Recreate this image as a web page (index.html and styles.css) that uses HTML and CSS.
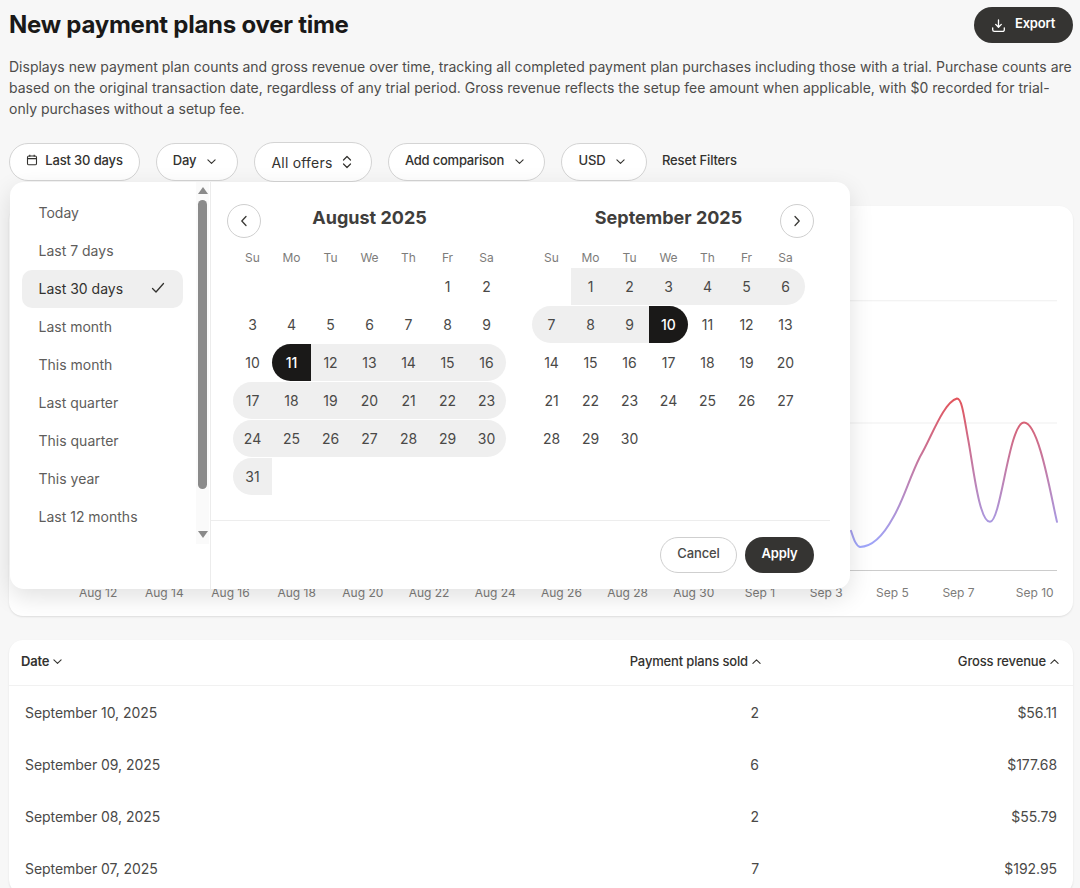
FILE: index.html
```html
<!DOCTYPE html>
<html lang="en">
<head>
<meta charset="utf-8">
<title>New payment plans over time</title>
<link rel="stylesheet" href="styles.css">
</head>
<body>
<main class="page">
  <header class="head">
    <h1 class="title">New payment plans over time</h1>
    <button class="export"><svg class="export-icon" viewBox="0 0 16 16" fill="none" stroke="currentColor" stroke-width="1.4" stroke-linecap="round" stroke-linejoin="round"><path d="M8 2v7.500M5 6.800 8 9.800l3-3M1.800 10.500v2a1.800 1.800 0 0 0 1.800 1.800h8.800a1.800 1.800 0 0 0 1.800-1.800v-2"/></svg>Export</button>
  </header>
  <p class="desc">Displays new payment plan counts and gross revenue over time, tracking all completed payment plan purchases including those with a trial. Purchase counts are based on the original transaction date, regardless of any trial period. Gross revenue reflects the setup fee amount when applicable, with $0 recorded for trial-only purchases without a setup fee.</p>

  <div class="filters">
    <button class="pill pill-date"><svg class="cal-icon" viewBox="0 0 12 12" fill="none" stroke="currentColor" stroke-width="1.1"><rect x="1.500" y="2" width="9" height="8.800" rx="1.400"/><path d="M1.500 4.600h9M3.800 .8v2M8.200 .8v2"/></svg>Last 30 days</button>
    <button class="pill pill-day">Day<svg class="chev" viewBox="0 0 10 6" fill="none" stroke="currentColor" stroke-width="1.200" stroke-linecap="round" stroke-linejoin="round"><path d="M1 1l4 4 4-4"/></svg></button>
    <button class="pill pill-offers">All offers<svg class="updown" viewBox="0 0 10 14" fill="none" stroke="currentColor" stroke-width="1.200" stroke-linecap="round" stroke-linejoin="round"><path d="M1.500 5 5 1.500 8.500 5M1.500 9 5 12.500 8.500 9"/></svg></button>
    <button class="pill pill-compare">Add comparison<svg class="chev" viewBox="0 0 10 6" fill="none" stroke="currentColor" stroke-width="1.200" stroke-linecap="round" stroke-linejoin="round"><path d="M1 1l4 4 4-4"/></svg></button>
    <button class="pill pill-usd">USD<svg class="chev" viewBox="0 0 10 6" fill="none" stroke="currentColor" stroke-width="1.200" stroke-linecap="round" stroke-linejoin="round"><path d="M1 1l4 4 4-4"/></svg></button>
    <button class="reset">Reset Filters</button>

    <div class="popup">
      <aside class="presets">
        <ul class="preset-list">
          <li class="preset">Today</li>
          <li class="preset">Last 7 days</li>
          <li class="preset preset-on">Last 30 days<svg class="check" viewBox="0 0 14 12" fill="none" stroke="currentColor" stroke-width="1.300" stroke-linecap="round" stroke-linejoin="round"><path d="M1.500 6.500 5 10l7.500-8.500"/></svg></li>
          <li class="preset">Last month</li>
          <li class="preset">This month</li>
          <li class="preset">Last quarter</li>
          <li class="preset">This quarter</li>
          <li class="preset">This year</li>
          <li class="preset">Last 12 months</li>
        </ul>
        <div class="scrollbar">
          <span class="arrow-up"></span>
          <span class="thumb"></span>
          <span class="arrow-down"></span>
        </div>
      </aside>
      <section class="cal">
        <div class="months">
          <div class="month month-a">
            <div class="month-head">
              <button class="nav"><svg viewBox="0 0 8 12" fill="none" stroke="currentColor" stroke-width="1.300" stroke-linecap="round" stroke-linejoin="round"><path d="M6 1.500 1.800 6 6 10.500"/></svg></button>
              <h2 class="month-title">August 2025</h2>
              <span class="nav-space"></span>
            </div>
            <div class="grid">
              <span class="wd">Su</span><span class="wd">Mo</span><span class="wd">Tu</span><span class="wd">We</span><span class="wd">Th</span><span class="wd">Fr</span><span class="wd">Sa</span>
              <span class="d"></span><span class="d"></span><span class="d"></span><span class="d"></span><span class="d"></span><span class="d">1</span><span class="d">2</span>
              <span class="d">3</span><span class="d">4</span><span class="d">5</span><span class="d">6</span><span class="d">7</span><span class="d">8</span><span class="d">9</span>
              <span class="d">10</span><span class="d sel sel-l">11</span><span class="d r">12</span><span class="d r">13</span><span class="d r">14</span><span class="d r">15</span><span class="d r rr">16</span>
              <span class="d r rl">17</span><span class="d r">18</span><span class="d r">19</span><span class="d r">20</span><span class="d r">21</span><span class="d r">22</span><span class="d r rr">23</span>
              <span class="d r rl">24</span><span class="d r">25</span><span class="d r">26</span><span class="d r">27</span><span class="d r">28</span><span class="d r">29</span><span class="d r rr">30</span>
              <span class="d r rl">31</span>
            </div>
          </div>
          <div class="month month-b">
            <div class="month-head">
              <span class="nav-space"></span>
              <h2 class="month-title">September 2025</h2>
              <button class="nav"><svg viewBox="0 0 8 12" fill="none" stroke="currentColor" stroke-width="1.300" stroke-linecap="round" stroke-linejoin="round"><path d="M2 1.500 6.200 6 2 10.500"/></svg></button>
            </div>
            <div class="grid">
              <span class="wd">Su</span><span class="wd">Mo</span><span class="wd">Tu</span><span class="wd">We</span><span class="wd">Th</span><span class="wd">Fr</span><span class="wd">Sa</span>
              <span class="d"></span><span class="d r">1</span><span class="d r">2</span><span class="d r">3</span><span class="d r">4</span><span class="d r">5</span><span class="d r rr">6</span>
              <span class="d r rl">7</span><span class="d r">8</span><span class="d r">9</span><span class="d sel sel-r">10</span><span class="d">11</span><span class="d">12</span><span class="d">13</span>
              <span class="d">14</span><span class="d">15</span><span class="d">16</span><span class="d">17</span><span class="d">18</span><span class="d">19</span><span class="d">20</span>
              <span class="d">21</span><span class="d">22</span><span class="d">23</span><span class="d">24</span><span class="d">25</span><span class="d">26</span><span class="d">27</span>
              <span class="d">28</span><span class="d">29</span><span class="d">30</span>
            </div>
          </div>
        </div>
        <footer class="cal-foot">
          <button class="cancel">Cancel</button>
          <button class="apply">Apply</button>
        </footer>
      </section>
    </div>
  </div>

  <section class="card chart">
    <svg class="plot" viewBox="0 0 1064 364" preserveAspectRatio="none" fill="none">
      <defs>
        <linearGradient id="lineGrad" gradientUnits="userSpaceOnUse" x1="0" y1="192" x2="0" y2="340">
          <stop offset="0" stop-color="#e2555c"/>
          <stop offset="1" stop-color="#9ea6fb"/>
        </linearGradient>
      </defs>
      <path class="gridline" d="M70 94.500H1048M70 216.500H1048"/>
      <path class="axis" d="M70 364H1048"/>
      <path class="curve" stroke="url(#lineGrad)" d="M842 324C845 333 847 339 851 340C862 340 873 331 884 311C895 292 900 272 911 250C922 232 934 196 948 192C953 192 955 210 959 232C964 258 970 315 981 315C992 315 1000 216 1015 216C1030 216 1042 290 1048 315"/>
    </svg>
    <div class="xlabels">
      <span>Aug 12</span><span>Aug 14</span><span>Aug 16</span><span>Aug 18</span><span>Aug 20</span><span>Aug 22</span><span>Aug 24</span><span>Aug 26</span><span>Aug 28</span><span>Aug 30</span><span>Sep 1</span><span>Sep 3</span><span>Sep 5</span><span>Sep 7</span><span class="last">Sep 10</span>
    </div>
  </section>

  <section class="card table">
    <div class="row row-head">
      <span class="th">Date<svg class="sort" viewBox="0 0 10 6" fill="none" stroke="currentColor" stroke-width="1.200" stroke-linecap="round" stroke-linejoin="round"><path d="M1 1l4 4 4-4"/></svg></span>
      <span class="th th-r">Payment plans sold<svg class="sort" viewBox="0 0 10 6" fill="none" stroke="currentColor" stroke-width="1.200" stroke-linecap="round" stroke-linejoin="round"><path d="M1 5l4-4 4 4"/></svg></span>
      <span class="th th-r">Gross revenue<svg class="sort" viewBox="0 0 10 6" fill="none" stroke="currentColor" stroke-width="1.200" stroke-linecap="round" stroke-linejoin="round"><path d="M1 5l4-4 4 4"/></svg></span>
    </div>
    <div class="row"><span class="td">September 10, 2025</span><span class="td td-r">2</span><span class="td td-r">$56.11</span></div>
    <div class="row"><span class="td">September 09, 2025</span><span class="td td-r">6</span><span class="td td-r">$177.68</span></div>
    <div class="row"><span class="td">September 08, 2025</span><span class="td td-r">2</span><span class="td td-r">$55.79</span></div>
    <div class="row"><span class="td">September 07, 2025</span><span class="td td-r">7</span><span class="td td-r">$192.95</span></div>
  </section>
</main>
</body>
</html>
```
FILE: styles.css
```css
* { box-sizing: border-box; }
html, body { margin: 0; height: 888px; overflow: hidden; }
body { background: #f7f7f7; font-family: Inter, "Liberation Sans", sans-serif; color: #1a1918; }
button { font: inherit; cursor: pointer; background: none; border: 0; padding: 0; color: inherit; }

.page { padding: 7px 7px 0 9px; }

.head { display: flex; justify-content: space-between; align-items: center; height: 36px; }
.title { margin: 0; font-size: 24px; font-weight: 700; letter-spacing: -0.25px; line-height: 36px; color: #1a1918; }
.export { display: flex; align-items: center; gap: 9px; width: 99px; height: 36px; padding: 0 0 4px 17px; border-radius: 18px; background: #353432; color: #fff; font-size: 13px; font-weight: 600; letter-spacing: -0.2px; }
.export-icon { width: 15px; height: 15px; margin-top: 4px; }

.desc { margin: 13px 0 0; font-size: 14px; line-height: 21px; color: #4d4c4a; letter-spacing: 0; }

.filters { position: relative; display: flex; align-items: center; gap: 16px; margin-top: 23px; height: 40px; }
.pill { display: flex; align-items: center; justify-content: center; height: 38px; padding-bottom: 4px; background: #fff; border: 1px solid #d4d4d4; border-radius: 19px; font-size: 13px; font-weight: 500; letter-spacing: -0.15px; color: #33322f; }
.pill-date { width: 131px; gap: 7px; }
.pill-day { width: 82px; gap: 11px; padding-right: 5px; }
.pill-offers { width: 118px; height: 40px; border-radius: 20px; gap: 9px; font-size: 14px; font-weight: 400; letter-spacing: 0.2px; padding: 0 3px 0 0; }
.pill-compare { width: 157px; gap: 11px; padding-right: 4px; letter-spacing: -0.22px; }
.pill-usd { width: 86px; gap: 11px; padding-right: 4px; }
.cal-icon { width: 12px; height: 12px; }
.chev { width: 9px; height: 5.400px; margin-top: 3px; }
.updown { width: 10px; height: 14px; }
.reset { margin-left: -1px; padding-bottom: 4px; font-size: 13px; font-weight: 500; letter-spacing: -0.15px; color: #33322f; }

.popup { position: absolute; z-index: 5; left: 1px; top: 40px; width: 840px; height: 407px; display: flex; background: #fff; border-radius: 14px; box-shadow: 0 8px 24px rgba(0,0,0,.12); }
.presets { position: relative; width: 201px; flex: none; border-right: 1px solid #ececec; padding: 12px 0 0 12px; }
.preset-list { list-style: none; margin: 0; padding: 0; width: 161px; }
.preset { display: flex; align-items: center; justify-content: space-between; height: 38px; padding: 0 18px 2px 16.500px; border-radius: 10px; font-size: 14px; letter-spacing: 0; color: #5e5d5b; }
.preset-on { background: #efefef; color: #33322f; }
.check { width: 14px; height: 12px; }

.scrollbar { position: absolute; top: 0; right: 1px; width: 13px; height: 362px; background: #fafafa; display: flex; flex-direction: column; align-items: center; }
.arrow-up, .arrow-down { width: 0; height: 0; border-left: 5px solid transparent; border-right: 5px solid transparent; }
.arrow-up { margin-top: 5px; border-bottom: 7px solid #8a8a8a; }
.arrow-down { margin-top: 42px; border-top: 7px solid #8a8a8a; }
.thumb { width: 9px; height: 289px; margin-top: 6px; border-radius: 5px; background: #8a8a8a; }

.cal { flex: 1; display: flex; flex-direction: column; }
.months { display: flex; height: 339px; border-bottom: 1px solid #ededed; margin-right: 20px; }
.month { width: 273px; }
.month-a { margin-left: 22px; }
.month-b { margin-left: 26px; width: 273px; }
.month-head { display: flex; align-items: center; justify-content: space-between; height: 34px; margin-top: 22px; }
.month-a .month-head { margin-left: -6px; margin-right: 6px; }
.month-b .month-head { margin-right: -9px; margin-left: 9px; }
.month-title { margin: -7px 0 0; font-size: 18px; font-weight: 700; color: #403e3c; letter-spacing: 0; }
.month-a .month-title { margin-left: 12px; }
.month-b .month-title { margin-right: 18px; }
.nav { width: 34px; height: 34px; flex: none; border: 1px solid #cfcfcf; border-radius: 50%; display: flex; align-items: center; justify-content: center; color: #3a3936; background: #fff; }
.nav svg { width: 8px; height: 12px; }
.nav-space { width: 34px; flex: none; }
.grid { display: grid; grid-template-columns: repeat(7, 39px); grid-template-rows: 22px; grid-auto-rows: 37px; row-gap: 1px; margin-top: 7px; }
.wd { display: flex; align-items: center; justify-content: center; height: 22px; padding-top: 2px; font-size: 12px; color: #7d7c7a; }
.d { display: flex; align-items: center; justify-content: center; height: 37px; font-size: 14px; color: #4a4947; }
.r { background: #efefef; }
.rl { border-radius: 18.500px 0 0 18.500px; }
.rr { border-radius: 0 18.500px 18.500px 0; }
.sel { background: #1a1918; color: #fff; font-weight: 500; }
.sel-l { border-radius: 18.500px 0 0 18.500px; }
.sel-r { border-radius: 0 18.500px 18.500px 0; }

.cal-foot { display: flex; justify-content: flex-end; gap: 8px; padding: 16px 36px 0 0; }
.cancel, .apply { height: 36px; padding-bottom: 4px; border-radius: 18px; font-size: 13px; font-weight: 500; letter-spacing: -0.15px; }
.cancel { width: 77px; border: 1px solid #cfcfcf; color: #4a4947; background: #fff; }
.apply { width: 69px; background: #353432; color: #fff; font-weight: 600; }

.card { background: #fff; border-radius: 14px; box-shadow: 0 1px 2px rgba(0,0,0,.1); }
.chart { position: relative; margin-top: 24px; height: 410px; }
.plot { display: block; width: 1064px; height: 365px; }
.gridline { stroke: #efefef; stroke-width: 1; }
.axis { stroke: #cccccc; stroke-width: 2; }
.curve { stroke-width: 2; stroke-linecap: round; }
.xlabels { display: flex; margin-top: 13px; padding-left: 56px; font-size: 12px; color: #7d7c7a; line-height: 18px; }
.xlabels span { width: 66.200px; text-align: center; flex: none; }
.xlabels .last { margin-left: 10px; }

.table { margin-top: 24px; }
.row { display: grid; grid-template-columns: 1fr 200px 298px; align-items: center; height: 52px; padding: 0 14px 0 16px; }
.row-head { height: 46px; padding: 0 14px 4px 12px; border-bottom: 1px solid #f1f1f1; }
.th { display: flex; align-items: center; gap: 4px; font-size: 13px; font-weight: 500; letter-spacing: -0.15px; color: #33322f; }
.th-r { justify-content: flex-end; }
.row-head .th:first-child { font-weight: 600; }
.sort { width: 9px; height: 5.400px; margin-top: 2px; }
.td { font-size: 14px; letter-spacing: -0.05px; color: #4a4947; }
.td-r { text-align: right; padding-right: 2px; }
```
